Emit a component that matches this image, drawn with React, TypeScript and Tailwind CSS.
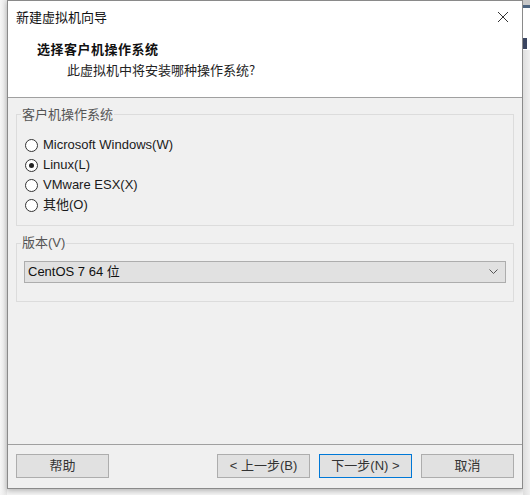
import React from "react";

const UI = { fontFamily: '"Liberation Sans", "Noto Sans CJK SC", sans-serif' };
const CJK = { fontFamily: '"Noto Sans CJK SC", "Liberation Sans", sans-serif' };

function Radio({ label, checked }: { label: string; checked?: boolean }) {
  return (
    <div className="flex items-center h-[20px]">
      <span className="w-[13px] h-[13px] rounded-full border border-[#333] bg-white flex items-center justify-center">
        {checked && <span className="w-[5px] h-[5px] rounded-full bg-[#222]" />}
      </span>
      <span className="ml-[5px] text-[13px] leading-[16px] text-[#1a1a1a]" style={UI}>
        {label}
      </span>
    </div>
  );
}

function Btn({ children, primary }: { children: React.ReactNode; primary?: boolean }) {
  return (
    <div
      className={
        "w-[93px] h-[24px] flex items-center justify-center bg-[#e1e1e1] border text-[13px] leading-[16px] text-[#333] " +
        (primary ? "border-[#0078d7]" : "border-[#adadad]")
      }
      style={UI}
    >
      {children}
    </div>
  );
}

export default function App() {
  return (
    <div className="w-[530px] h-[495px] flex bg-[#f4f4f4] overflow-hidden">
      <div className="w-[7px] h-full bg-gradient-to-r from-[#f6f6f6] to-[#e6e6e6]" />
      <div className="w-[516px] h-[489px] border border-[#8a8a8a] flex flex-col bg-[#f0f0f0] shadow-[0_2px_5px_rgba(0,0,0,0.25)]">
        {/* header */}
        <div className="h-[97px] bg-white border-b border-[#a0a0a0] flex flex-col">
          <div className="h-[32px] flex items-center justify-between pl-[8px] pr-[12px]">
            <span className="text-[13px] leading-[16px] text-[#111]" style={CJK}>
              新建虚拟机向导
            </span>
            <svg width="12" height="12" viewBox="0 0 12 12" className="mr-[1px]">
              <path d="M1 1 L11 11 M11 1 L1 11" stroke="#333" strokeWidth="1" fill="none" />
            </svg>
          </div>
          <div
            className="mt-[8px] pl-[29px] text-[13px] leading-[16px] font-bold text-[#111] tracking-[0.5px]"
            style={CJK}
          >
            选择客户机操作系统
          </div>
          <div className="mt-[5px] pl-[59px] text-[13px] leading-[16px] text-[#222]" style={CJK}>
            此虚拟机中将安装哪种操作系统?
          </div>
        </div>

        {/* body */}
        <div className="flex-1 px-[8px] pt-[8px]">
          <fieldset className="border border-[#dcdcdc] px-[8px] pt-[13px] pb-[10px] m-0">
            <legend className="ml-[-4px] px-[1px] text-[13px] leading-[16px] text-[#555]" style={CJK}>
              客户机操作系统
            </legend>
            <Radio label="Microsoft Windows(W)" />
            <Radio label="Linux(L)" checked />
            <Radio label="VMware ESX(X)" />
            <Radio label="其他(O)" />
          </fieldset>
          <fieldset className="mt-[9px] border border-[#dcdcdc] px-[7px] pt-[10px] pb-[18px] m-0">
            <legend className="ml-[-3px] px-[1px] text-[13px] leading-[16px] text-[#555]" style={UI}>
              版本(V)
            </legend>
            <div className="h-[22px] bg-[#e1e1e1] border border-[#adadad] flex items-center justify-between pl-[3px] pr-[7px]">
              <span className="text-[13px] leading-[16px] text-[#111]" style={UI}>
                CentOS 7 64 位
              </span>
              <svg width="9" height="6" viewBox="0 0 9 6">
                <path d="M0.5 0.5 L4.5 4.5 L8.5 0.5" stroke="#555" strokeWidth="1" fill="none" />
              </svg>
            </div>
          </fieldset>
        </div>

        {/* footer */}
        <div className="h-[44px] border-t border-[#a0a0a0] flex justify-between px-[8px] pt-[9px]">
          <Btn>帮助</Btn>
          <div className="flex gap-[9px]">
            <Btn>&lt; 上一步(B)</Btn>
            <Btn primary>下一步(N) &gt;</Btn>
            <Btn>取消</Btn>
          </div>
        </div>
      </div>
      <div className="w-[7px] h-full flex flex-col">
        <div className="h-[5px] bg-[#c8c8c8]" />
        <div className="h-[3px] bg-[#4d6580]" />
        <div className="h-[28px] bg-white" />
        <div className="h-[14px] bg-white flex items-center">
          <span className="w-[4px] h-[11px] bg-[#3a4560]" />
        </div>
        <div className="flex-1 bg-gradient-to-r from-[#dedede] to-[#f0f0f0]" />
      </div>
    </div>
  );
}
